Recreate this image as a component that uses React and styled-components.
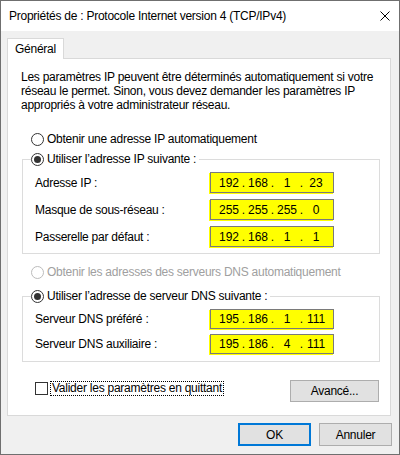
import React from 'react';
import styled, { createGlobalStyle } from 'styled-components';

const GlobalStyle = createGlobalStyle`
  html, body {
    margin: 0;
    padding: 0;
    background: #fff;
  }
  body {
    font-family: "Liberation Sans", Arial, sans-serif;
    font-size: 12px;
    letter-spacing: -0.25px;
    color: #000;
  }
`;

const Window = styled.div`
  width: 400px;
  height: 455px;
  box-sizing: border-box;
  border: 1px solid #6f6f6f;
  background: #f0f0f0;
  display: flex;
  flex-direction: column;
`;

const TitleBar = styled.div`
  height: 30px;
  flex-shrink: 0;
  background: #fff;
  display: flex;
  align-items: center;
  justify-content: space-between;
  padding: 0 9px 0 8px;
`;

const Body = styled.div`
  flex: 1;
  display: flex;
  flex-direction: column;
  padding: 7px 8px 0 6px;
`;

const TabStrip = styled.div`
  display: flex;
`;

const Tab = styled.div`
  position: relative;
  z-index: 1;
  height: 21px;
  box-sizing: border-box;
  margin-bottom: -1px;
  padding: 0 7px;
  line-height: 20px;
  background: #fff;
  border: 1px solid #d9d9d9;
  border-bottom: none;
`;

const Panel = styled.div`
  background: #fff;
  border: 1px solid #d9d9d9;
  padding: 11px 10px 13px 13px;
`;

const Description = styled.p`
  margin: 0;
  line-height: 14px;
  white-space: nowrap;
`;

const RadioRow = styled.label`
  display: flex;
  align-items: center;
  height: 16px;
  margin: ${p => p.$margin || '0'};
  color: ${p => (p.$disabled ? '#a0a0a0' : '#000')};
  white-space: nowrap;
`;

const RadioCircle = styled.span`
  width: 13px;
  height: 13px;
  box-sizing: border-box;
  margin-right: 3px;
  border-radius: 50%;
  border: 1px solid ${p => (p.$disabled ? '#bcbcbc' : '#333')};
  background: #fff;
  display: flex;
  align-items: center;
  justify-content: center;

  &::after {
    content: '';
    display: ${p => (p.$checked ? 'block' : 'none')};
    width: 7px;
    height: 7px;
    border-radius: 50%;
    background: #333;
  }
`;

const Group = styled.fieldset`
  margin: ${p => p.$top}px 0 0 1px;
  padding: 0 8px ${p => p.$bottom}px;
  border: 1px solid #dcdcdc;
  min-width: 0;
`;

const GroupLegend = styled.legend`
  padding: 0 3px 0 0;
`;

const FieldGrid = styled.div`
  display: grid;
  grid-template-columns: 175px 124px;
  row-gap: ${p => p.$gap}px;
  align-items: center;
  padding: 5px 0 0 4px;
`;

const IpBox = styled.div`
  height: ${p => p.$height}px;
  box-sizing: border-box;
  border: 1px solid #7a7a7a;
  background: #ffff00;
  box-shadow: -1px 1px 0 #ffff00;
  display: flex;
  align-items: center;
  padding-left: 7px;
  letter-spacing: 0;
`;

const Octet = styled.span`
  width: 22px;
  text-align: center;
`;

const Dot = styled.span`
  width: 7px;
  text-align: center;
`;

const BottomRow = styled.div`
  display: flex;
  justify-content: space-between;
  align-items: flex-start;
  margin-top: 18px;
`;

const CheckRow = styled.label`
  display: flex;
  align-items: center;
  height: 16px;
  margin-left: 14px;
`;

const CheckBox = styled.span`
  width: 13px;
  height: 13px;
  box-sizing: border-box;
  border: 1px solid #333;
  background: #fff;
`;

const FocusLabel = styled.span`
  margin-left: 2px;
  padding: 0 1px;
  line-height: 13px;
  border: 1px dotted #000;
`;

const Button = styled.button`
  width: ${p => p.$width}px;
  height: ${p => p.$height}px;
  box-sizing: border-box;
  padding: 0;
  font: inherit;
  letter-spacing: inherit;
  color: #000;
  background: #e1e1e1;
  border: ${p => (p.$default ? '2px solid #0078d7' : '1px solid #adadad')};
  margin-right: ${p => p.$right || 0}px;
`;

const Footer = styled.div`
  display: flex;
  justify-content: flex-end;
  gap: 8px;
  padding-top: 7px;
  margin-right: -1px;
`;

function CloseIcon() {
  return (
    <svg width="10" height="10" viewBox="0 0 10 10">
      <path d="M0.5 0.5 L9.5 9.5 M9.5 0.5 L0.5 9.5" stroke="#000" strokeWidth="1" fill="none" />
    </svg>
  );
}

function Radio({ checked, disabled, children, margin }) {
  return (
    <RadioRow $disabled={disabled} $margin={margin}>
      <RadioCircle $checked={checked} $disabled={disabled} />
      {children}
    </RadioRow>
  );
}

function IpField({ value, height }) {
  const parts = value.split('.');
  return (
    <IpBox $height={height}>
      {parts.map((p, i) => (
        <React.Fragment key={i}>
          <Octet>{p}</Octet>
          {i < 3 && <Dot>.</Dot>}
        </React.Fragment>
      ))}
    </IpBox>
  );
}

const ipRows = [
  ['Adresse IP :', '192.168.1.23'],
  ['Masque de sous-réseau :', '255.255.255.0'],
  ['Passerelle par défaut :', '192.168.1.1'],
];

const dnsRows = [
  ['Serveur DNS préféré :', '195.186.1.111'],
  ['Serveur DNS auxiliaire :', '195.186.4.111'],
];

export default function App() {
  return (
    <>
      <GlobalStyle />
      <Window>
        <TitleBar>
          <span>Propriétés de : Protocole Internet version 4 (TCP/IPv4)</span>
          <CloseIcon />
        </TitleBar>
        <Body>
          <TabStrip>
            <Tab>Général</Tab>
          </TabStrip>
          <Panel>
            <Description>
              Les paramètres IP peuvent être déterminés automatiquement si votre
              <br />
              réseau le permet. Sinon, vous devez demander les paramètres IP
              <br />
              appropriés à votre administrateur réseau.
            </Description>

            <Radio margin="19px 0 0 10px">Obtenir une adresse IP automatiquement</Radio>

            <Group $top={4} $bottom={6}>
              <GroupLegend>
                <Radio checked>Utiliser l’adresse IP suivante :</Radio>
              </GroupLegend>
              <FieldGrid $gap={6}>
                {ipRows.map(([label, ip]) => (
                  <React.Fragment key={label}>
                    <span>{label}</span>
                    <IpField value={ip} height={21} />
                  </React.Fragment>
                ))}
              </FieldGrid>
            </Group>

            <Radio disabled margin="10px 0 0 10px">
              Obtenir les adresses des serveurs DNS automatiquement
            </Radio>

            <Group $top={8} $bottom={7}>
              <GroupLegend>
                <Radio checked>Utiliser l’adresse de serveur DNS suivante :</Radio>
              </GroupLegend>
              <FieldGrid $gap={5}>
                {dnsRows.map(([label, ip]) => (
                  <React.Fragment key={label}>
                    <span>{label}</span>
                    <IpField value={ip} height={20} />
                  </React.Fragment>
                ))}
              </FieldGrid>
            </Group>

            <BottomRow>
              <CheckRow>
                <CheckBox />
                <FocusLabel>Valider les paramètres en quittant</FocusLabel>
              </CheckRow>
              <Button $width={89} $height={22} $right={1}>Avancé...</Button>
            </BottomRow>
          </Panel>

          <Footer>
            <Button $width={73} $height={23} $default>OK</Button>
            <Button $width={73} $height={23}>Annuler</Button>
          </Footer>
        </Body>
      </Window>
    </>
  );
}
